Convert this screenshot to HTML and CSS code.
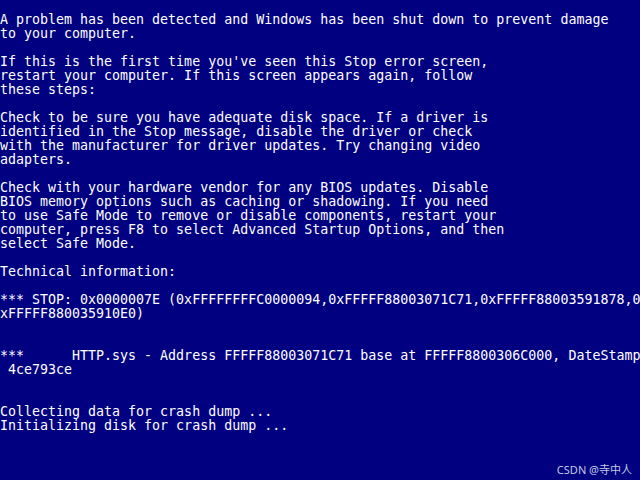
FILE: index.html
```html
<!DOCTYPE html>
<html>
<head>
<meta charset="utf-8">
<link rel="stylesheet" href="styles.css">
</head>
<body>
<pre class="bsod">A problem has been detected and Windows has been shut down to prevent damage
to your computer.

If this is the first time you've seen this Stop error screen,
restart your computer. If this screen appears again, follow
these steps:

Check to be sure you have adequate disk space. If a driver is
identified in the Stop message, disable the driver or check
with the manufacturer for driver updates. Try changing video
adapters.

Check with your hardware vendor for any BIOS updates. Disable
BIOS memory options such as caching or shadowing. If you need
to use Safe Mode to remove or disable components, restart your
computer, press F8 to select Advanced Startup Options, and then
select Safe Mode.

Technical information:

*** STOP: 0x0000007E (0xFFFFFFFFC0000094,0xFFFFF88003071C71,0xFFFFF88003591878,0
xFFFFF880035910E0)


***      HTTP.sys - Address FFFFF88003071C71 base at FFFFF8800306C000, DateStamp
 4ce793ce


Collecting data for crash dump ...
Initializing disk for crash dump ...</pre>
<div class="watermark">CSDN @寺中人</div>
</body>
</html>
```

FILE: styles.css
```css
html, body {
  margin: 0;
  padding: 0;
  width: 640px;
  height: 480px;
  background: #000080;
  overflow: hidden;
}
body {
  position: relative;
}
.bsod {
  margin: 13px 0 0 0;
  padding: 0;
  color: #ffffff;
  font-family: "DejaVu Sans Mono", "Liberation Mono", monospace;
  font-size: 13.3px;
  line-height: 14px;
  white-space: pre;
  overflow: hidden;
  width: 640px;
  -webkit-font-smoothing: none;
}
.watermark {
  position: absolute;
  right: 8px;
  bottom: 3px;
  color: #c4c8e0;
  font-family: "Noto Sans", "Noto Sans CJK SC", sans-serif;
  font-size: 11px;
  line-height: 14px;
}
```
